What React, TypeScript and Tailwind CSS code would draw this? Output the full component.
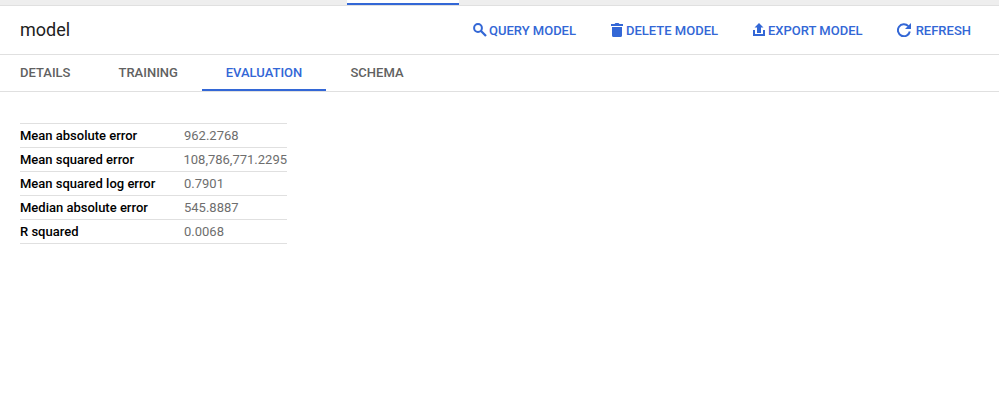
import React from "react";

const iconClass = "h-[14px] w-[14px] shrink-0";

const actions = [
  {
    label: "QUERY MODEL",
    width: "w-[103px]",
    icon: (
      <svg className={iconClass} viewBox="0 0 14 14" fill="none" stroke="currentColor" strokeWidth="2">
        <circle cx="5" cy="5" r="3.900" />
        <path d="M8 8l5 5" strokeWidth="2.300" />
      </svg>
    ),
  },
  {
    label: "DELETE MODEL",
    width: "w-[107px]",
    icon: (
      <svg className={iconClass} viewBox="0 0 14 14" fill="currentColor">
        <path d="M0 1h3.500l1-1h3l1 1H12v2H0zM1 4h10v8.500a1.500 1.500 0 0 1-1.500 1.500h-7A1.500 1.500 0 0 1 1 12.500z" />
      </svg>
    ),
  },
  {
    label: "EXPORT MODEL",
    width: "w-[109.5px] -mr-[0.5px]",
    icon: (
      <svg className={iconClass} viewBox="0 0 14 14" fill="currentColor">
        <path d="M6 0l4.500 4.500H8V10H4V4.500H1.500zM0 7h2v4h8V7h2v6H0z" />
      </svg>
    ),
  },
  {
    label: "REFRESH",
    width: "w-[74px]",
    icon: (
      <svg className={iconClass} viewBox="0 0 14 14" fill="none">
        <path d="M11.300 3.100A6 6 0 1 0 12.800 8.500" stroke="currentColor" strokeWidth="2" />
        <path d="M14 0v6H8z" fill="currentColor" />
      </svg>
    ),
  },
];

const metrics = [
  ["Mean absolute error", "962.2768"],
  ["Mean squared error", "108,786,771.2295"],
  ["Mean squared log error", "0.7901"],
  ["Median absolute error", "545.8887"],
  ["R squared", "0.0068"],
];

export default function App() {
  return (
    <div className="h-[403px] w-[999px] overflow-hidden bg-white font-[Roboto,sans-serif] text-[13px] text-[#212121]">
      <div className="h-[6px] border-b border-[#e0e0e0] bg-[#eeeeee]">
        <div className="ml-[347px] h-[5px] w-[112px] border-b-2 border-[#3367d6] bg-white" />
      </div>
      <header className="flex h-[49px] items-center border-b border-[#e0e0e0] pl-5 pr-7">
        <h1 className="pb-0.5 text-[18px]">model</h1>
        <div className="ml-auto flex gap-[35px] font-medium text-[#3367d6]">
          {actions.map((a) => (
            <button key={a.label} className={`flex items-center justify-between whitespace-nowrap ${a.width}`}>
              {a.icon}
              <span className="-ml-4 pt-px">{a.label}</span>
            </button>
          ))}
        </div>
      </header>
      <nav className="flex h-[37px] border-b border-[#e0e0e0] font-medium leading-[36px] text-[#616161]">
        <div className="w-[94px] pl-5">DETAILS</div>
        <div className="w-[108px] pl-[24.5px]">TRAINING</div>
        <div className="h-[36px] w-[124px] border-b-2 border-[#3367d6] text-center text-[#3367d6]">EVALUATION</div>
        <div className="pl-[24.5px]">SCHEMA</div>
      </nav>
      <dl className="ml-5 mt-[31px] w-[267px] border-t border-[#e0e0e0]">
        {metrics.map(([k, v]) => (
          <div key={k} className="flex h-6 border-b border-[#e0e0e0] leading-[23px]">
            <dt className="w-[164px] font-medium text-black">{k}</dt>
            <dd className="text-[#6e6e6e]">{v}</dd>
          </div>
        ))}
      </dl>
    </div>
  );
}
